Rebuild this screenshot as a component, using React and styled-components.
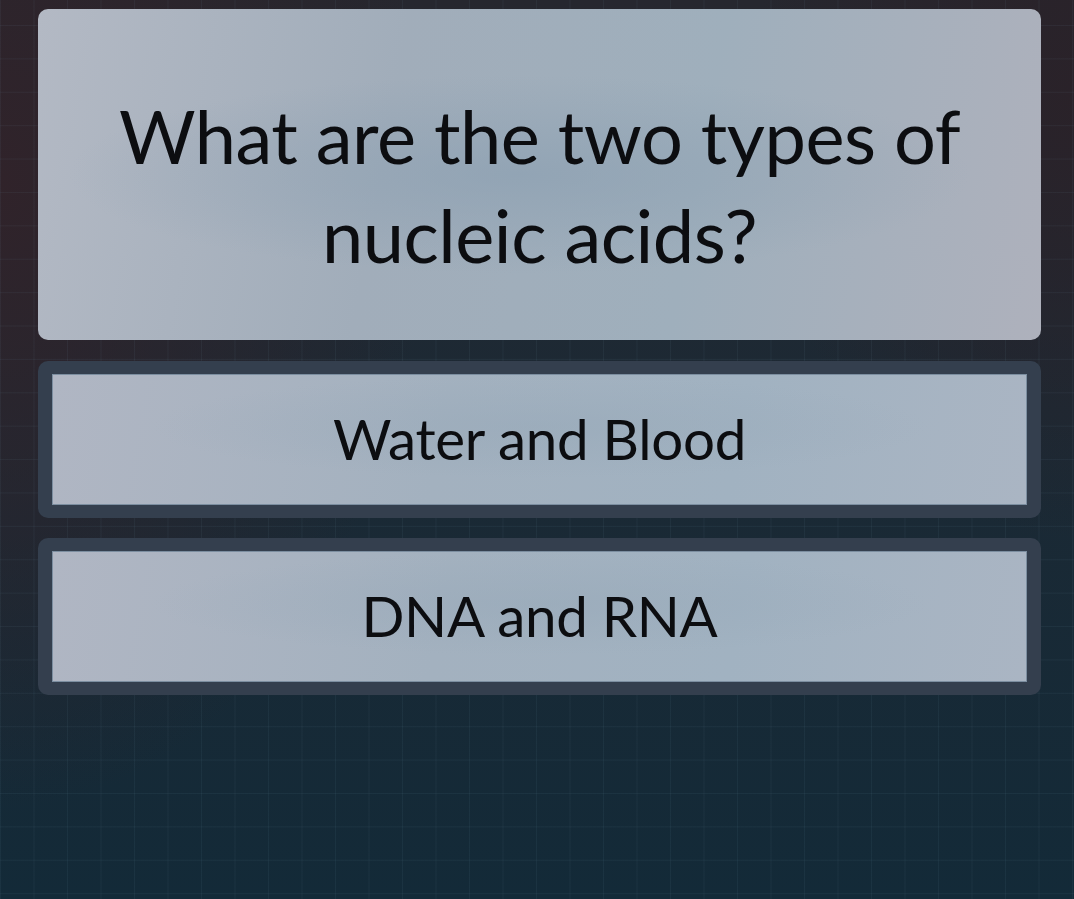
import React from "react";
import styled, { createGlobalStyle } from "styled-components";

const GlobalStyle = createGlobalStyle`
  html, body {
    margin: 0;
    padding: 0;
    height: 100%;
  }
  body {
    font-family: Lato, "Open Sans", sans-serif;
    background: #1a2a36;
  }
`;

const Stage = styled.div`
  position: relative;
  width: 1074px;
  height: 899px;
  overflow: hidden;
  box-sizing: border-box;
  padding: 9px 33px 0 38px;
  display: flex;
  flex-direction: column;
  gap: 21px;
  background:
    linear-gradient(rgba(120, 160, 180, 0.075) 1px, transparent 1px) 0 25px / 100% 33.4px,
    linear-gradient(90deg, rgba(120, 160, 180, 0.075) 1px, transparent 1px) 0 0 / 33.5px 100%,
    radial-gradient(ellipse 40% 70% at 0% 20%, #30232a 0%, rgba(48, 35, 42, 0) 100%),
    radial-gradient(ellipse 30% 50% at 100% 10%, #2a2229 0%, rgba(42, 34, 41, 0) 100%),
    linear-gradient(180deg, #26272f 0%, #1c2934 45%, #132a38 100%);
`;

const QuestionCard = styled.div`
  height: 331px;
  border-radius: 10px;
  display: flex;
  align-items: center;
  justify-content: center;
  text-align: center;
  padding: 20px 40px 0;
  box-sizing: border-box;
  background:
    radial-gradient(ellipse 45% 30% at 48% 50%, rgba(140, 160, 178, 0.7) 0%, rgba(140, 160, 178, 0) 100%),
    linear-gradient(100deg, #b3b9c4 0%, #a1adba 35%, #9fafbc 65%, #aeb1bc 100%);
`;

const QuestionText = styled.h1`
  margin: 0;
  font-family: Lato, "Open Sans", sans-serif;
  font-weight: 400;
  font-size: 74px;
  line-height: 99px;
  color: #0c0d10;
  letter-spacing: -0.5px;
`;

const AnswerList = styled.div`
  display: flex;
  flex-direction: column;
  gap: 20px;
`;

const AnswerFrame = styled.div`
  height: 157px;
  box-sizing: border-box;
  padding: 13px 14px;
  border-radius: 10px;
  background: #343f4e;
  display: flex;
`;

const AnswerFace = styled.div`
  flex: 1;
  display: flex;
  align-items: center;
  justify-content: center;
  border: 1px solid #7c8ea0;
  background:
    radial-gradient(ellipse 40% 40% at 50% 40%, rgba(150, 168, 184, 0.5) 0%, rgba(150, 168, 184, 0) 100%),
    linear-gradient(100deg, #b0b6c3 0%, #a3b1bf 40%, #a1b2c1 70%, #aab5c3 100%);
`;

const AnswerText = styled.span`
  font-family: Lato, "Open Sans", sans-serif;
  font-size: 56.5px;
  font-weight: 400;
  color: #0c0d10;
  letter-spacing: -0.3px;
  transform: translateY(-2px);
`;

const answers = ["Water and Blood", "DNA and RNA"];

export default function App() {
  return (
    <>
      <GlobalStyle />
      <Stage>
        <QuestionCard>
          <QuestionText>
            What are the two types of
            <br />
            nucleic acids?
          </QuestionText>
        </QuestionCard>
        <AnswerList>
          {answers.map((a) => (
            <AnswerFrame key={a}>
              <AnswerFace>
                <AnswerText>{a}</AnswerText>
              </AnswerFace>
            </AnswerFrame>
          ))}
        </AnswerList>
      </Stage>
    </>
  );
}
